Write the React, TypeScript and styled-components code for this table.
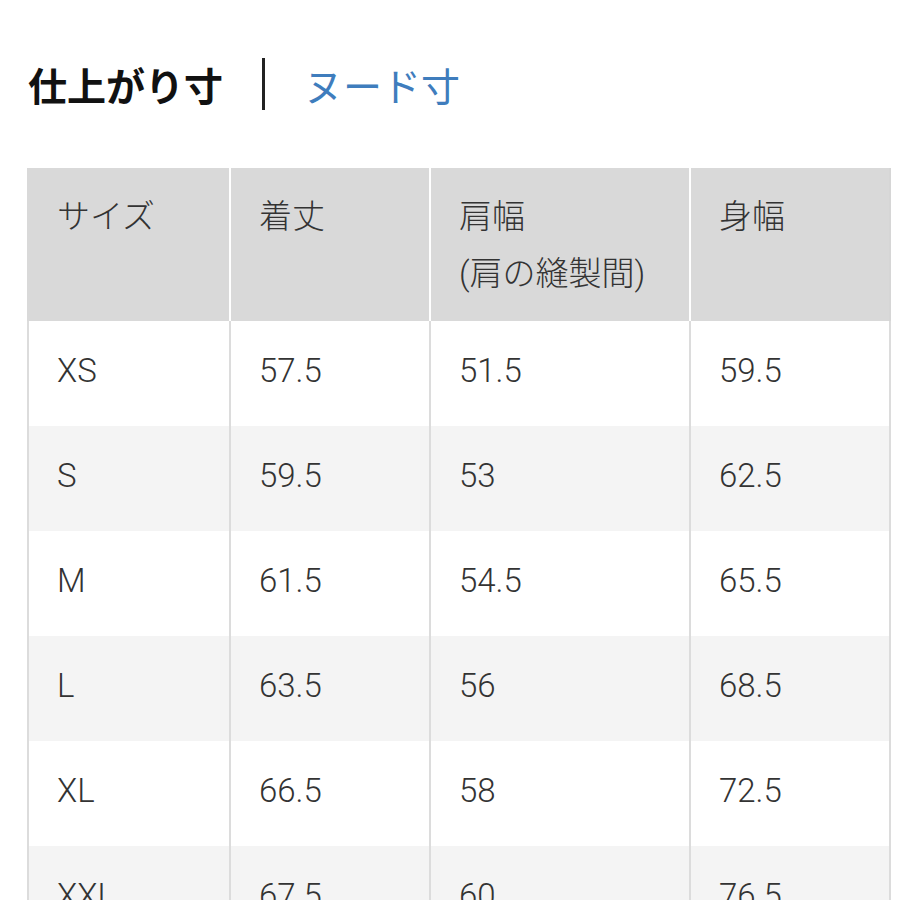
import styled, { createGlobalStyle } from "styled-components";

const GlobalStyle = createGlobalStyle`
  html, body {
    margin: 0;
    padding: 0;
    background: #ffffff;
    overflow: hidden;
  }
  body {
    font-family: Roboto, "Noto Sans CJK JP", sans-serif;
  }
`;

const COLUMNS = "202px 200px 260px 200px";

const HEADERS = ["サイズ", "着丈", "肩幅\n(肩の縫製間)", "身幅"];

const ROWS = [
  ["XS", "57.5", "51.5", "59.5"],
  ["S", "59.5", "53", "62.5"],
  ["M", "61.5", "54.5", "65.5"],
  ["L", "63.5", "56", "68.5"],
  ["XL", "66.5", "58", "72.5"],
  ["XXL", "67.5", "60", "76.5"],
];

function App() {
  return (
    <Root>
      <GlobalStyle />
      <Tabs>
        <ActiveTab>仕上がり寸</ActiveTab>
        <Divider />
        <LinkTab>ヌード寸</LinkTab>
      </Tabs>
      <Table>
        <HeadRow>
          {HEADERS.map((h, i) => (
            <HeadCell key={i} $first={i === 0}>
              {h}
            </HeadCell>
          ))}
        </HeadRow>
        {ROWS.map((row, r) => (
          <BodyRow key={row[0]} $striped={r % 2 === 1}>
            {row.map((v, i) => (
              <Cell key={i}>{v}</Cell>
            ))}
          </BodyRow>
        ))}
      </Table>
    </Root>
  );
}

const Root = styled.div`
  padding: 58px 0 0 27px;
  width: 864px;
`;

const Tabs = styled.div`
  display: flex;
  align-items: center;
  height: 52px;
  gap: 39px;
  padding-left: 1px;
`;

const ActiveTab = styled.span`
  font-family: "Noto Sans CJK JP", sans-serif;
  font-size: 39px;
  font-weight: 700;
  color: #111111;
`;

const LinkTab = styled.span`
  font-family: "Noto Sans CJK JP", sans-serif;
  font-size: 39px;
  font-weight: 400;
  color: #3f7dbd;
`;

const Divider = styled.span`
  width: 3px;
  height: 52px;
  background: #222222;
`;

const Table = styled.div`
  margin-top: 58px;
  display: flex;
  flex-direction: column;
`;

const HeadRow = styled.div`
  display: grid;
  grid-template-columns: ${COLUMNS};
  border-right: 2px solid #d6d6d6;
`;

const HeadCell = styled.div<{ $first?: boolean }>`
  background: #d9d9d9;
  border-left: 2px solid ${(p) => (p.$first ? "#d9d9d9" : "#ffffff")};
  height: 153px;
  box-sizing: border-box;
  padding: 20px 0 0 28px;
  font-size: 33px;
  line-height: 57px;
  font-weight: 300;
  color: #333333;
  white-space: pre-line;
`;

const BodyRow = styled.div<{ $striped?: boolean }>`
  display: grid;
  grid-template-columns: ${COLUMNS};
  background: ${(p) => (p.$striped ? "#f4f4f4" : "#ffffff")};
  border-right: 2px solid #dcdcdc;
`;

const Cell = styled.div`
  border-left: 2px solid #dcdcdc;
  height: 105px;
  box-sizing: border-box;
  padding: 21px 0 0 28px;
  font-size: 33px;
  line-height: 57px;
  font-weight: 300;
  color: #333333;
`;

export default App;
